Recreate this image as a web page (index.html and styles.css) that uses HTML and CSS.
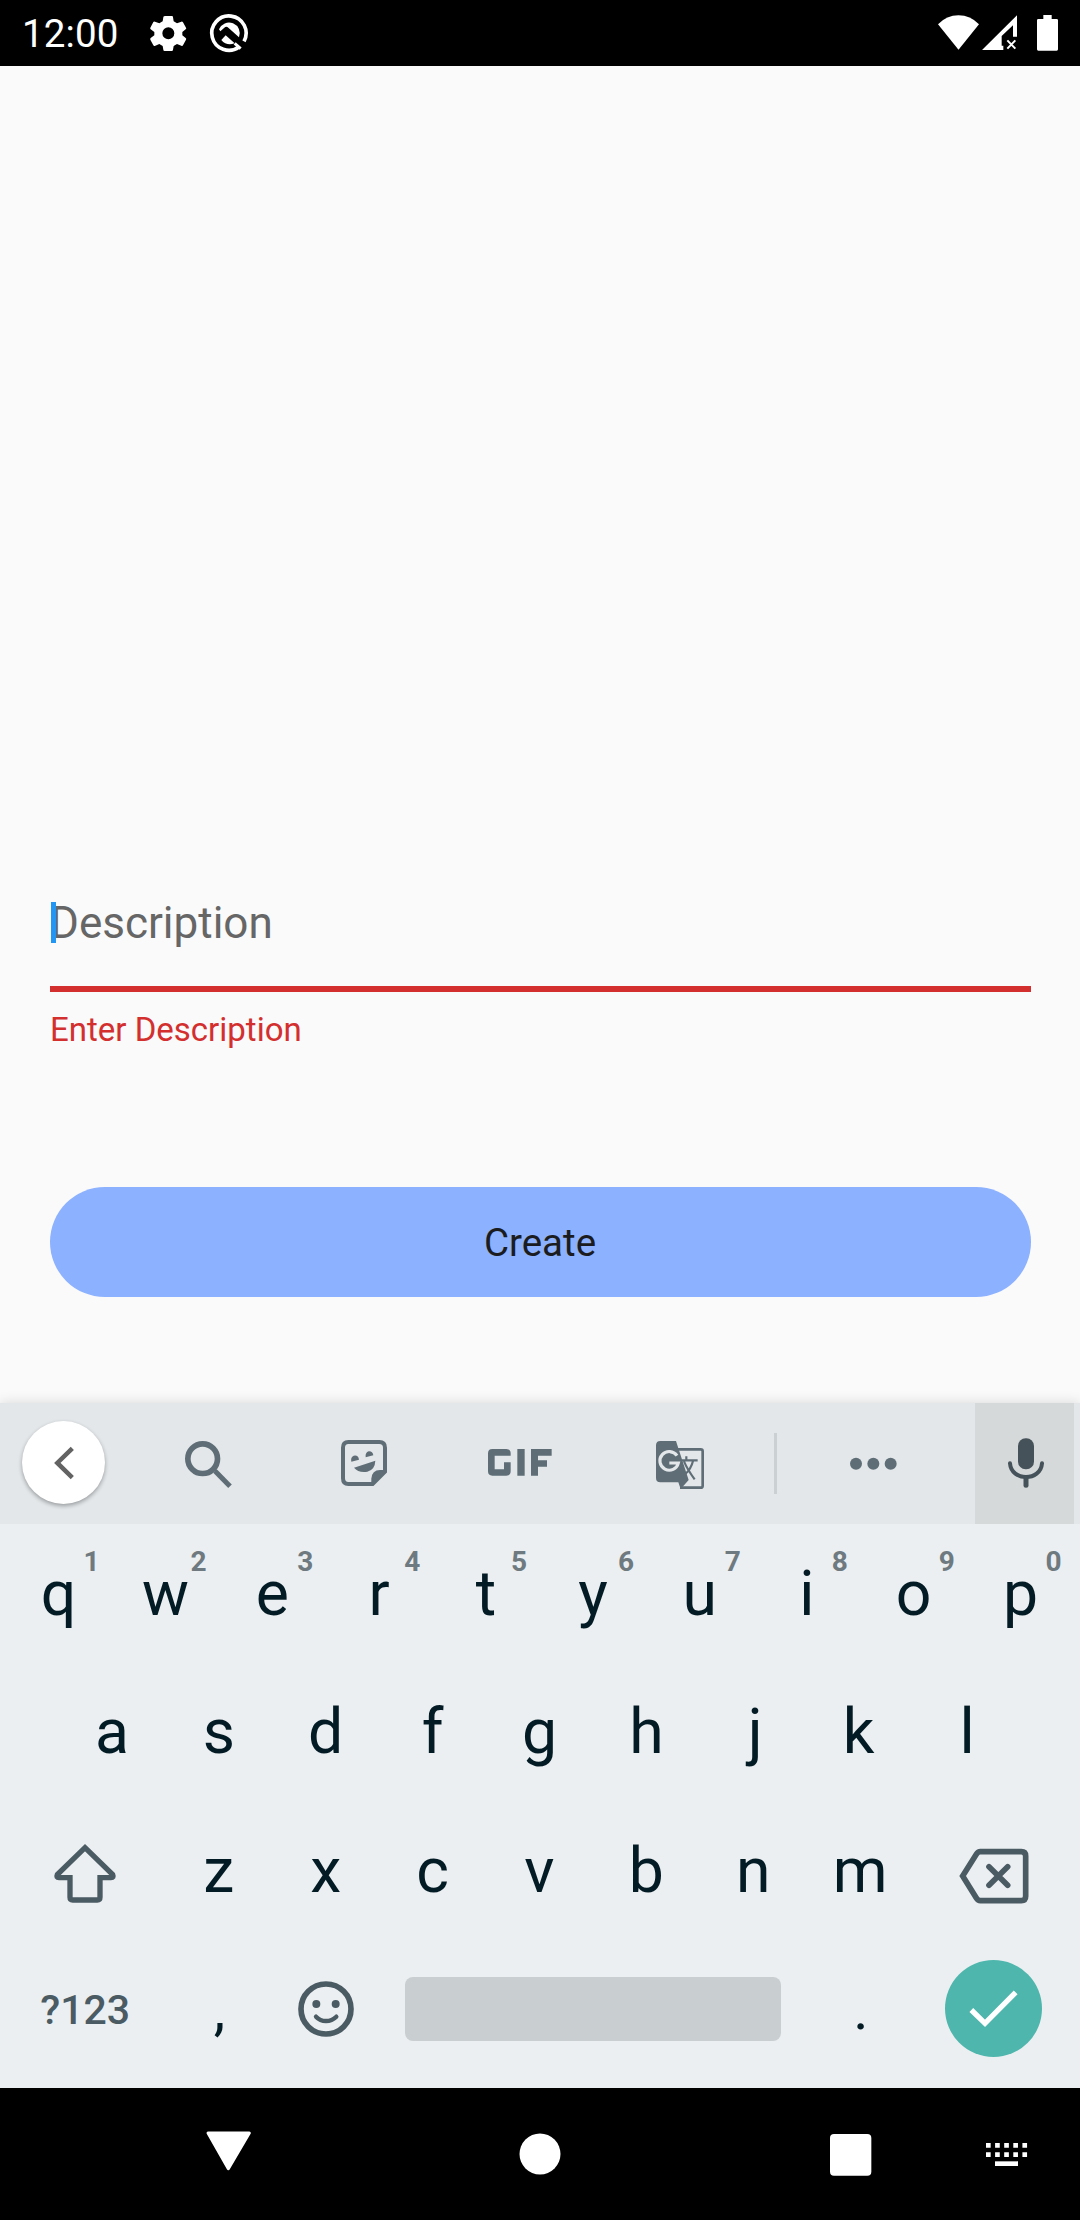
FILE: index.html
```html
<!DOCTYPE html>
<html lang="en">
<head>
<meta charset="utf-8">
<title>Create</title>
<link rel="stylesheet" href="styles.css">
</head>
<body>
<div class="screen">
  <header class="status">
    <span class="clock">12:00</span>
    <svg class="status-left" viewBox="450 0 310 198" fill="#fff">
      <path fill-rule="evenodd" d="M494 48h22q3 0 3 4l2 12 10 6 13-5q3-1 5 2l9 16q2 3-1 5l-10 8v10l10 8q3 2 1 5l-9 17q-2 3-5 1l-13-5-10 6-2 11q0 4-4 4h-21q-4 0-4-4l-2-11-10-6-12 5q-4 2-6-1l-9-17q-1-3 1-5l11-8v-10l-11-8q-2-2-1-5l9-17q2-3 5-1l13 5 10-6 2-12q0-3 3-3zM505 82a18 18 0 1 0 0 36a18 18 0 1 0 0-36z"/>
      <path d="M732 124A51.500 51.500 0 1 0 717 141" fill="none" stroke="#fff" stroke-width="11"/>
      <path d="M657 88A32 32 0 0 1 717 112L685 83q-6-5-12 0l-12 11z"/>
      <path d="M664 120l13-14 27 24q-24 9-40-10z"/>
      <path d="M704 130L722 146" stroke="#fff" stroke-width="9"/>
    </svg>
    <svg class="status-right" viewBox="0 0 480 198" fill="#fff">
      <path d="M54 73Q80 46 115.500 46T177 73L115.500 149z"/>
      <path d="M186 150L291 46V110H279V76L245 108V137H250V150z"/>
      <path d="M262 121l24 25M286 121l-24 25" stroke="#fff" stroke-width="6"/>
      <path d="M370 45h25v12h15q4 0 4 4v87q0 4-4 4h-55q-4 0-4-4v-87q0-4 4-4h15z"/>
    </svg>
  </header>

  <main class="form">
    <div class="field">
      <span class="hint">Description</span>
      <i class="cursor"></i>
    </div>
    <p class="error">Enter Description</p>
    <button class="create" type="button">Create</button>
  </main>

  <section class="keyboard">
    <div class="strip">
      <div class="collapse-cell">
        <span class="collapse"><svg viewBox="66 93 250 250" fill="none" stroke="#636363" stroke-width="13.500"><path d="M217 175L172 219L217 263"/></svg></span>
      </div>
      <svg viewBox="393 39 468 363" fill="none" stroke="#5f6e76">
        <circle cx="608" cy="206" r="44.500" stroke-width="17"/>
        <path d="M645 243L690 289" stroke-width="15"/><path d="M644 234l20 20v10l-19-14z" fill="#5f6e76" stroke="none"/>
      </svg>
      <svg viewBox="861 39 462 363" fill="#5f6e76">
        <path d="M1045 156H1138Q1155 156 1155 173V245L1118 282H1045Q1029 282 1029 265V173Q1029 156 1045 156z" fill="none" stroke="#5f6e76" stroke-width="12"/>
        <path d="M1114 286V266Q1116 240 1140 240H1159L1120 282z"/>
        <path d="M1054 215Q1051 202 1061 197Q1075 194 1077 209zM1097 202Q1095 188 1106 184Q1118 183 1120 196zM1062 233L1126 212Q1125 239 1102 245Q1075 249 1062 233z"/>
      </svg>
      <svg viewBox="123 39 474 363" fill="#5f6e76">
        <path d="M277 177H319Q332 177 332 190V197H284V238H312V217H332V244Q332 257 319 257H277Q264 257 264 244V190Q264 177 277 177zM352 177H374V257H352zM393 177H455V197H414V211H441V230H414V257H393z"/>
      </svg>
      <svg viewBox="597 39 486 363">
        <path d="M833 178H902Q908 178 908 184V287Q908 293 902 293H840" fill="none" stroke="#5f6e76" stroke-width="8"/>
        <path d="M781 153H828L866 270L842 297L835 277H781Q768 277 768 264V166Q768 153 781 153z" fill="#5f6e76"/>
        <path d="M831 197A28 28 0 1 0 835 219H808" fill="none" stroke="#e3e7ea" stroke-width="9.500"/>
        <path d="M846 211H893M859 199V211M879 213Q873 237 856 252M852 214Q862 238 884 268" fill="none" stroke="#5f6e76" stroke-width="6.500"/>
      </svg>
      <i class="divider"></i>
      <svg viewBox="150 39 498 363" fill="#5f6e76"><circle cx="348" cy="221" r="18"/><circle cx="400" cy="221" r="18"/><circle cx="452" cy="221" r="18"/></svg>
      <svg class="mic" viewBox="705 39 297 363" fill="none" stroke="#455259" stroke-linecap="round">
        <rect x="834" y="145" width="48" height="93" rx="23" fill="#455259" stroke="none"/>
        <path d="M810 220C814 275 902 275 906 220" stroke-width="12"/><path d="M858 264V286" stroke-width="15"/>
      </svg>
    </div>

    <div class="keys">
      <div class="row">
        <span class="key">q<sup>1</sup></span><span class="key">w<sup>2</sup></span><span class="key">e<sup>3</sup></span><span class="key">r<sup>4</sup></span><span class="key">t<sup>5</sup></span><span class="key">y<sup>6</sup></span><span class="key">u<sup>7</sup></span><span class="key">i<sup>8</sup></span><span class="key">o<sup>9</sup></span><span class="key">p<sup>0</sup></span>
      </div>
      <div class="row">
        <span class="key">a</span><span class="key">s</span><span class="key">d</span><span class="key">f</span><span class="key">g</span><span class="key">h</span><span class="key key-j">j</span><span class="key key-k">k</span><span class="key">l</span>
      </div>
      <div class="row">
        <span class="key wide"><svg class="shift" width="64" height="62" viewBox="161 545 192 186" fill="none" stroke="#4b5b63" stroke-width="16"><path d="M257 562L340 643Q344 652 335 652H302V711Q302 719 294 719H220Q212 719 212 711V652H179Q170 652 174 643z"/></svg></span><span class="key">z</span><span class="key">x</span><span class="key">c</span><span class="key">v</span><span class="key">b</span><span class="key">n</span><span class="key">m</span><span class="key wide"><svg class="backspace" width="72" height="58" viewBox="770 562 216 174" fill="none" stroke="#4b5b63" stroke-width="17"><path d="M784 649L825 584Q830 576 837 576H960Q973 576 973 589V710Q973 723 960 723H837Q830 723 825 715z"/><path d="M863 621L919 677M919 621L863 677" stroke-linecap="round"/></svg></span>
      </div>
      <div class="row">
        <span class="key wide symbols">?123</span><span class="key punct">,</span><span class="key"><svg width="56" height="56" viewBox="891 153 168 168" fill="none" stroke="#4b5b63"><circle cx="975" cy="237" r="75" stroke-width="17"/><path d="M945 260Q957 273 975 273T1006 260" stroke-width="13" stroke-linecap="round"/><circle cx="946" cy="222" r="12" fill="#4b5b63" stroke="none"/><circle cx="1004" cy="222" r="12" fill="#4b5b63" stroke="none"/></svg></span><span class="key space"><i class="bar"></i></span><span class="key punct">.</span><span class="key wide"><span class="enter"><svg viewBox="615 90 291 291" fill="none" stroke="#fff" stroke-width="16"><path d="M694 240L735 280L827 187"/></svg></span></span>
      </div>
    </div>
  </section>

  <nav class="nav">
    <svg class="nav-back" viewBox="0 474 1260 396"><path d="M624 609H748L685 716z" fill="#fff" stroke="#fff" stroke-width="9" stroke-linejoin="round"/></svg>
    <svg class="nav-home" viewBox="0 0 320 132"><circle cx="120" cy="66" r="20.500" fill="#fff"/></svg>
    <svg class="nav-recent" viewBox="0 474 600 396"><rect x="270" y="612" width="124" height="125" rx="12" fill="#fff"/></svg>
    <svg class="nav-ime" viewBox="600 474 420 396" fill="none" stroke="#fff" stroke-width="14"><path d="M738 646H863M738 674H863" stroke-dasharray="14 13.300"/><path d="M765 701H834"/></svg>
  </nav>
</div>
</body>
</html>
```

FILE: styles.css
```css
* { box-sizing: border-box; }
body { margin: 0; background: #fafafa; font-family: Roboto, sans-serif; }
svg { display: block; }

.screen { width: 1080px; height: 2220px; display: flex; flex-direction: column; overflow: hidden; }

.status { height: 66px; background: #000; color: #fff; display: flex; align-items: center; flex: none; }
.clock { width: 150px; padding: 2px 0 0 22px; font-size: 38.5px; line-height: 64px; letter-spacing: 0.1px; }
.status-left { width: 103.33px; height: 66px; }
.status-right { width: 160px; height: 66px; margin-left: auto; }

.form { height: 1337px; flex: none; padding: 816px 49.5px 0; display: flex; flex-direction: column; }
.field { position: relative; height: 110px; border-bottom: 6px solid #d32f2f; line-height: 82px; }
.hint { padding-left: 0.5px; font-size: 44px; color: #666; }
.cursor { position: absolute; left: 1px; top: 20px; width: 5.5px; height: 41px; background: #2196f3; }
.error { margin: 18px 0 0; padding-left: 0.5px; font-size: 33px; line-height: 40px; color: #d32f2f; }
.create { margin: 137px 0 0; height: 110px; padding: 2px 0 0; border: 0; border-radius: 55px; background: #8cb1ff; color: #1b1c20; font: 38.5px/108px Roboto, sans-serif; }

.keyboard { height: 685px; flex: none; background: #ebeff2; box-shadow: 0 0 12px rgba(0, 0, 0, 0.14); }
.strip { height: 121px; background: #e3e7ea; display: grid; grid-template-columns: 131px 156px 154px 158px 162px 29px 166px 99px; align-items: center; }
.strip > svg { width: 100%; height: 121px; }
.collapse-cell { padding: 0 0 2px 22px; }
.collapse { display: block; width: 83.3px; height: 83.3px; border-radius: 50%; background: #fff; box-shadow: 0 2px 4px rgba(0, 0, 0, 0.32); }
.divider { justify-self: center; width: 3px; height: 61px; background: #cbd0d3; }
.strip > .mic { background: #d5d9da; margin-left: 19px; width: 99px; }

.keys { padding: 0 6px 0 5px; }
.row { display: flex; justify-content: center; height: 138.5px; }
.key { position: relative; width: 106.9px; flex: none; display: flex; align-items: center; justify-content: center; font-size: 62.5px; line-height: 139px; color: #031b24; }
.key.wide { width: 160.35px; }
.key.space { width: 427.6px; }
.key sup { position: absolute; left: 66.5px; top: 23.5px; width: 40px; text-align: center; font-size: 28px; line-height: 28px; font-weight: 700; color: #6e7a80; }
.key.symbols { padding-top: 3px; font-size: 41px; font-weight: 500; line-height: 130px; color: #4b5b63; }
.key.punct { padding-left: 1.5px; font-size: 58px; line-height: 130px; }
.key-j { padding-left: 4px; }
.key-k { padding-right: 3px; }
.shift { margin-top: 5px; }
.backspace { margin-top: 12px; }
.bar { width: 376px; height: 64px; border-radius: 8px; background: #c9ced1; }
.enter { width: 97px; height: 97px; border-radius: 50%; background: #4eb6ac; }

.nav { height: 132px; flex: none; background: #000; display: flex; }
.nav svg { height: 132px; }
.nav-back { width: 420px; }
.nav-home { width: 320px; }
.nav-recent { width: 200px; }
.nav-ime { width: 140px; }
```
